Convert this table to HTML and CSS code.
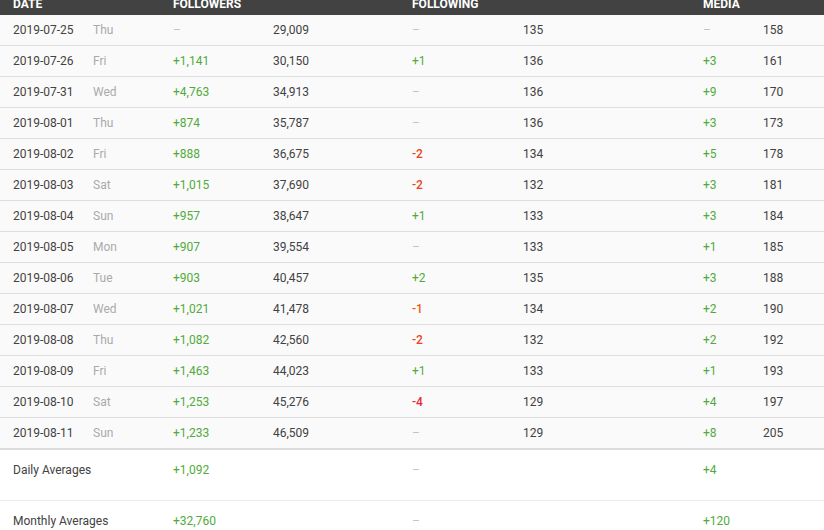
FILE: index.html
```html
<!DOCTYPE html>
<html lang="en">
<head>
    <meta charset="UTF-8">
    <title>Daily Stats</title>
    <link rel="stylesheet" href="styles.css">
</head>
<body>

    <table class="stats-table">
        <colgroup>
            <col class="c-date"><col class="c-day">
            <col class="c-fchg"><col class="c-ftot">
            <col class="c-gchg"><col class="c-gtot">
            <col class="c-mchg"><col class="c-mtot">
        </colgroup>
        <thead>
            <tr>
                <th colspan="2">Date</th>
                <th colspan="2">Followers</th>
                <th colspan="2">Following</th>
                <th colspan="2">Media</th>
            </tr>
        </thead>
        <tbody id="rows"></tbody>
        <tfoot>
            <tr>
                <td colspan="2" class="label">Daily Averages</td>
                <td class="up">+1,092</td><td></td>
                <td class="none">&ndash;</td><td></td>
                <td class="up">+4</td><td></td>
            </tr>
            <tr>
                <td colspan="2" class="label">Monthly Averages</td>
                <td class="up">+32,760</td><td></td>
                <td class="none">&ndash;</td><td></td>
                <td class="up">+120</td><td></td>
            </tr>
        </tfoot>
    </table>

    <script>
        const data = [
            ["2019-07-25", "Thu", "", "29,009", "", "135", "", "158"],
            ["2019-07-26", "Fri", "+1,141", "30,150", "+1", "136", "+3", "161"],
            ["2019-07-31", "Wed", "+4,763", "34,913", "", "136", "+9", "170"],
            ["2019-08-01", "Thu", "+874", "35,787", "", "136", "+3", "173"],
            ["2019-08-02", "Fri", "+888", "36,675", "-2", "134", "+5", "178"],
            ["2019-08-03", "Sat", "+1,015", "37,690", "-2", "132", "+3", "181"],
            ["2019-08-04", "Sun", "+957", "38,647", "+1", "133", "+3", "184"],
            ["2019-08-05", "Mon", "+907", "39,554", "", "133", "+1", "185"],
            ["2019-08-06", "Tue", "+903", "40,457", "+2", "135", "+3", "188"],
            ["2019-08-07", "Wed", "+1,021", "41,478", "-1", "134", "+2", "190"],
            ["2019-08-08", "Thu", "+1,082", "42,560", "-2", "132", "+2", "192"],
            ["2019-08-09", "Fri", "+1,463", "44,023", "+1", "133", "+1", "193"],
            ["2019-08-10", "Sat", "+1,253", "45,276", "-4", "129", "+4", "197"],
            ["2019-08-11", "Sun", "+1,233", "46,509", "", "129", "+8", "205"]
        ];

        function changeCell(value) {
            if (!value) return '<td class="none">&ndash;</td>';
            if (value[0] === '-') return '<td class="down down' + value.slice(1) + '">' + value + '</td>';
            return '<td class="up">' + value + '</td>';
        }

        let html = '';
        data.forEach(function (r) {
            html += '<tr>' +
                '<td>' + r[0] + '</td>' +
                '<td class="day">' + r[1] + '</td>' +
                changeCell(r[2]) + '<td>' + r[3] + '</td>' +
                changeCell(r[4]) + '<td>' + r[5] + '</td>' +
                changeCell(r[6]) + '<td>' + r[7] + '</td>' +
                '</tr>';
        });
        document.getElementById('rows').innerHTML = html;
    </script>

</body>
</html>
```

FILE: styles.css
```css
body {
    margin: 0;
    background-color: #ffffff;
    font-family: Roboto, "Liberation Sans", Arial, sans-serif;
    font-size: 12px;
    color: #424242;
}

.stats-table {
    width: 824px;
    table-layout: fixed;
    border-collapse: collapse;
    margin-top: -15px;
}

.c-date { width: 93px; }
.c-day { width: 80px; }
.c-fchg { width: 100px; }
.c-ftot { width: 139px; }
.c-gchg { width: 111px; }
.c-gtot { width: 180px; }
.c-mchg { width: 60px; }
.c-mtot { width: 61px; }

.stats-table th {
    background-color: #424242;
    color: #ffffff;
    text-transform: uppercase;
    font-weight: bold;
    text-align: left;
    line-height: 14px;
    padding: 12px 0 4px 0;
}

.stats-table th:first-child,
.stats-table td:first-child {
    padding-left: 13px;
}

.stats-table tbody tr {
    background-color: #fafafa;
    border-bottom: 1px solid #dedede;
}

.stats-table tbody tr:last-child {
    border-bottom: 2px solid #dcdcdc;
}

.stats-table tbody td {
    height: 30px;
    padding: 0;
    line-height: 30px;
    white-space: nowrap;
}

.stats-table tfoot tr {
    background-color: #ffffff;
    border-bottom: 1px solid #ececec;
}

.stats-table tfoot td {
    height: 51px;
    padding: 13px 0 0 0;
    line-height: 14px;
    vertical-align: top;
    box-sizing: border-box;
}

.day {
    color: #aaaaaa;
}

.up {
    color: #51aa3a;
}

.none {
    color: #c4c4c4;
}

.down {
    font-weight: 500;
    color: #ea4a1f;
}

.down1 { color: #eb5a1c; }
.down2 { color: #ea4322; }
.down4 { color: #e22a3a; }
```
